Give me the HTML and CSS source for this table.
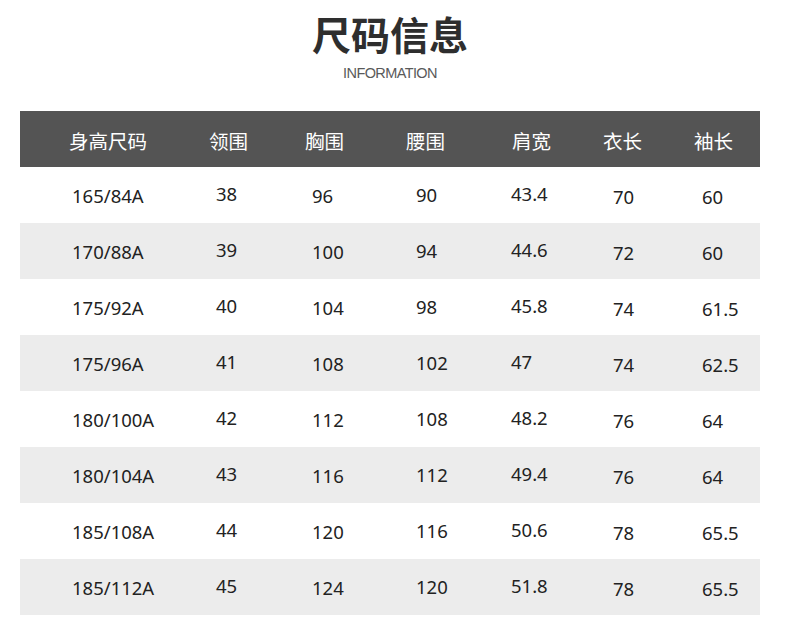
FILE: index.html
```html
<!DOCTYPE html>
<html lang="zh-CN">
<head>
<meta charset="utf-8">
<title>尺码信息</title>
<link rel="stylesheet" href="styles.css">
</head>
<body>
<div class="page">
  <div class="heading">
    <h1 class="title">尺码信息</h1>
    <div class="subtitle">INFORMATION</div>
  </div>
  <div class="table">
    <div class="head">
      <div class="h c1">身高尺码</div>
      <div class="h">领围</div>
      <div class="h">胸围</div>
      <div class="h">腰围</div>
      <div class="h">肩宽</div>
      <div class="h">衣长</div>
      <div class="h">袖长</div>
    </div>
    <div class="row"><div class="d c1">165/84A</div><div class="d c2">38</div><div class="d c3">96</div><div class="d c4">90</div><div class="d c5">43.4</div><div class="d c6">70</div><div class="d c7">60</div></div>
    <div class="row alt"><div class="d c1">170/88A</div><div class="d c2">39</div><div class="d c3">100</div><div class="d c4">94</div><div class="d c5">44.6</div><div class="d c6">72</div><div class="d c7">60</div></div>
    <div class="row"><div class="d c1">175/92A</div><div class="d c2">40</div><div class="d c3">104</div><div class="d c4">98</div><div class="d c5">45.8</div><div class="d c6">74</div><div class="d c7">61.5</div></div>
    <div class="row alt"><div class="d c1">175/96A</div><div class="d c2">41</div><div class="d c3">108</div><div class="d c4">102</div><div class="d c5">47</div><div class="d c6">74</div><div class="d c7">62.5</div></div>
    <div class="row"><div class="d c1">180/100A</div><div class="d c2">42</div><div class="d c3">112</div><div class="d c4">108</div><div class="d c5">48.2</div><div class="d c6">76</div><div class="d c7">64</div></div>
    <div class="row alt"><div class="d c1">180/104A</div><div class="d c2">43</div><div class="d c3">116</div><div class="d c4">112</div><div class="d c5">49.4</div><div class="d c6">76</div><div class="d c7">64</div></div>
    <div class="row"><div class="d c1">185/108A</div><div class="d c2">44</div><div class="d c3">120</div><div class="d c4">116</div><div class="d c5">50.6</div><div class="d c6">78</div><div class="d c7">65.5</div></div>
    <div class="row alt"><div class="d c1">185/112A</div><div class="d c2">45</div><div class="d c3">124</div><div class="d c4">120</div><div class="d c5">51.8</div><div class="d c6">78</div><div class="d c7">65.5</div></div>
  </div>
</div>
</body>
</html>
```
FILE: styles.css
```css
html, body {
  margin: 0;
  padding: 0;
  background: #ffffff;
}

.page {
  width: 740px;
  margin-left: 20px;
}

.heading {
  display: flex;
  flex-direction: column;
  align-items: center;
  padding-top: 14px;
  height: 111px;
  box-sizing: border-box;
}

.title {
  margin: 0;
  font-family: "Noto Sans CJK SC", sans-serif;
  font-weight: 700;
  font-size: 39px;
  line-height: 1;
  color: #2e2e2e;
}

.subtitle {
  margin-top: 13px;
  font-family: "Liberation Sans", Arial, sans-serif;
  font-weight: 400;
  font-size: 14.5px;
  line-height: 1;
  letter-spacing: -0.6px;
  color: #5a5a5a;
}

.table {
  display: flex;
  flex-direction: column;
}

.head {
  display: grid;
  grid-template-columns: 189px 96px 101px 106px 91px 91px 1fr;
  height: 56px;
  background: #545454;
}

.h {
  font-family: "Noto Sans CJK SC", sans-serif;
  font-size: 19.5px;
  line-height: 1;
  color: #ffffff;
  padding-top: 20px;
}

.h.c1 {
  padding-left: 49px;
}

.row {
  display: grid;
  grid-template-columns: 196px 96px 104px 95px 102px 89px 1fr;
  height: 56px;
  background: #ffffff;
}

.row.alt {
  background: #ececec;
}

.d {
  font-family: "Noto Sans", "Noto Sans CJK SC", sans-serif;
  font-size: 18.5px;
  line-height: 24px;
  color: #222222;
  padding-top: 17px;
}

.d.c1 {
  padding-left: 52px;
}

.d.c2 { padding-top: 15px; }
.d.c3 { padding-top: 17px; }
.d.c4 { padding-top: 16px; }
.d.c5 { padding-top: 14.5px; }
.d.c6 { padding-top: 18px; }
.d.c7 { padding-top: 18px; }
```
